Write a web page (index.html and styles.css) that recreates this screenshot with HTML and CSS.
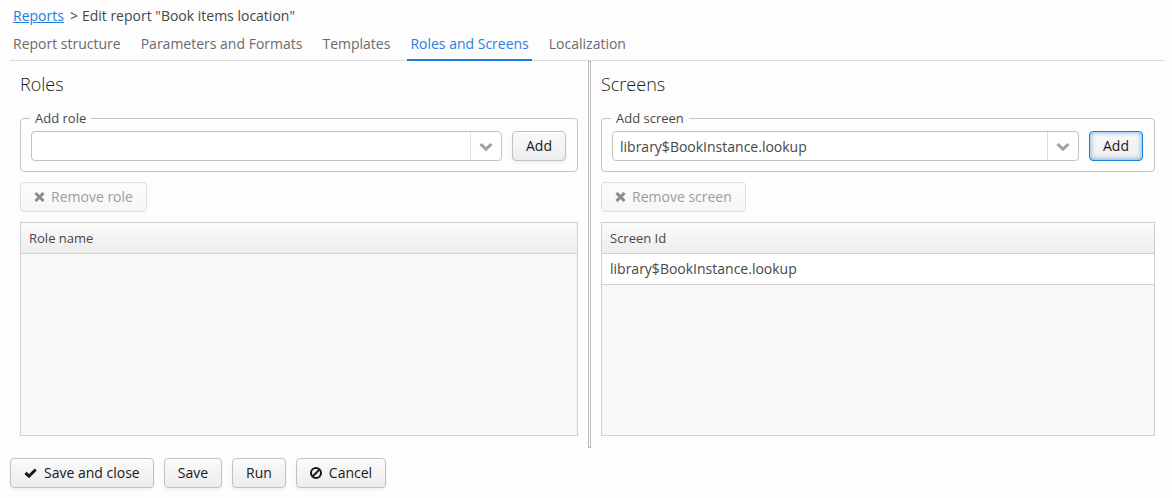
FILE: index.html
```
<!DOCTYPE html>
<html lang="en">
<head>
<meta charset="utf-8">
<title>Edit report "Book items location"</title>
<link rel="stylesheet" href="styles.css">
</head>
<body>
<div class="page">
  <nav class="breadcrumbs"><a href="#">Reports</a><span class="separator">&gt;</span><span>Edit report "Book items location"</span></nav>
  <nav class="tabs">
    <button class="tab" type="button">Report structure</button>
    <button class="tab" type="button">Parameters and Formats</button>
    <button class="tab" type="button">Templates</button>
    <button class="tab active" type="button">Roles and Screens</button>
    <button class="tab" type="button">Localization</button>
  </nav>
  <main class="split">
    <section class="pane">
      <h2>Roles</h2>
      <fieldset class="group">
        <legend>Add role</legend>
        <div class="combo">
          <select aria-label="Add role"><option></option></select>
          <span class="arrow"><svg width="14" height="10" viewBox="0 0 14 10"><path d="M1.500 2 7 7.200 12.500 2" fill="none" stroke="currentColor" stroke-width="3"/></svg></span>
        </div>
        <button class="btn" type="button">Add</button>
      </fieldset>
      <button class="btn remove" type="button" disabled><svg width="11" height="10" viewBox="0 0 11 10"><path d="M1.500 1 9.500 9M9.500 1 1.500 9" stroke="currentColor" stroke-width="3"/></svg>Remove role</button>
      <div class="grid">
        <table>
          <thead><tr><th>Role name</th></tr></thead>
        </table>
      </div>
    </section>
    <div class="splitter"></div>
    <section class="pane">
      <h2>Screens</h2>
      <fieldset class="group">
        <legend>Add screen</legend>
        <div class="combo">
          <select aria-label="Add screen"><option>library$BookInstance.lookup</option></select>
          <span class="arrow"><svg width="14" height="10" viewBox="0 0 14 10"><path d="M1.500 2 7 7.200 12.500 2" fill="none" stroke="currentColor" stroke-width="3"/></svg></span>
        </div>
        <button class="btn focused" type="button">Add</button>
      </fieldset>
      <button class="btn remove" type="button" disabled><svg width="11" height="10" viewBox="0 0 11 10"><path d="M1.500 1 9.500 9M9.500 1 1.500 9" stroke="currentColor" stroke-width="3"/></svg>Remove screen</button>
      <div class="grid">
        <table>
          <thead><tr><th>Screen Id</th></tr></thead>
          <tbody><tr><td>library$BookInstance.lookup</td></tr></tbody>
        </table>
      </div>
    </section>
  </main>
  <footer class="actions">
    <button class="btn" type="button"><svg width="13" height="10" viewBox="0 0 13 10"><path d="M1.500 4.800 5 8.200 11.700 1.500" fill="none" stroke="currentColor" stroke-width="3"/></svg>Save and close</button>
    <button class="btn" type="button">Save</button>
    <button class="btn" type="button">Run</button>
    <button class="btn" type="button"><svg width="12" height="12" viewBox="0 0 12 12"><circle cx="6" cy="6" r="5" fill="none" stroke="currentColor" stroke-width="2"/><path d="M2.500 9.500 9.500 2.500" stroke="currentColor" stroke-width="2"/></svg>Cancel</button>
  </footer>
</div>
</body>
</html>
```
FILE: styles.css
```
* {
  box-sizing: border-box;
}

body {
  margin: 0;
  background: #fdfdfd;
  color: #474747;
  font: 14px/20px "Open Sans", "Noto Sans", sans-serif;
}

button,
select {
  font: inherit;
}

.page {
  display: flex;
  flex-direction: column;
  min-height: 100vh;
  padding: 6px 7px 10px 10px;
}

.breadcrumbs {
  display: flex;
  padding-left: 3px;
}

.breadcrumbs a {
  color: #197de1;
}

.separator {
  margin: 0 4px 0 6px;
}

.tabs {
  display: flex;
  gap: 14px;
  padding-top: 3px;
  border-bottom: 1px solid #dbdbdb;
}

.tab {
  height: 32px;
  margin-bottom: -1px;
  padding: 0 3px;
  border: 0;
  border-bottom: 2px solid transparent;
  background: none;
  color: #6b6b6b;
}

.tab.active {
  border-bottom-color: #197de1;
  color: #2b7de0;
}

.split {
  display: flex;
  flex: 1;
}

.pane {
  display: flex;
  flex: 1 1 20px;
  flex-direction: column;
  align-items: stretch;
  min-width: 0;
  padding: 9px 10px 12px;
}

.pane:first-child {
  flex-basis: 24px;
}

.splitter {
  width: 3px;
  border: 1px solid #bbb;
}

h2 {
  margin: 0 0 14px;
  color: #191919;
  font-size: 18px;
  font-weight: 300;
  line-height: 28px;
}

.group {
  display: flex;
  gap: 10px;
  min-width: 0;
  margin: -4px 0 10px;
  padding: 3px 11px 10px 10px;
  border: 1px solid #c2c2c2;
  border-radius: 4px;
}

.group legend {
  margin-left: -1px;
  padding: 0 5px;
  font-size: 13px;
  line-height: 20px;
}

.combo {
  display: flex;
  flex: 1;
  position: relative;
  height: 30px;
  min-width: 0;
}

.combo select {
  width: 100%;
  padding: 2px 38px 0 7px;
  border: 1px solid #c2c2c2;
  border-radius: 4px;
  background: #fff;
  color: #474747;
  appearance: none;
}

.arrow {
  display: flex;
  position: absolute;
  top: 1px;
  right: 1px;
  bottom: 1px;
  align-items: center;
  justify-content: center;
  width: 31px;
  padding-top: 2px;
  border-left: 1px solid #dedede;
  color: #a0a0a0;
  pointer-events: none;
}

.btn {
  display: flex;
  gap: 7px;
  align-items: center;
  height: 30px;
  padding: 0 13px;
  border: 1px solid #c0c0c0;
  border-radius: 4px;
  background: linear-gradient(#fafafa, #ededed);
  box-shadow: inset 0 1px 0 #fff, 0 2px 3px rgba(0, 0, 0, 0.05);
  color: #191919;
}

.btn.focused {
  border-color: #197de1;
  box-shadow: inset 0 0 4px 1px rgba(25, 125, 225, 0.5);
}

.btn:disabled {
  border-color: #dedede;
  background: linear-gradient(#fcfcfc, #f6f6f6);
  box-shadow: none;
  color: #9d9d9d;
}

.remove {
  gap: 6px;
  align-self: flex-start;
  margin-bottom: 10px;
}

.remove svg {
  color: #8c8c8c;
}

.grid {
  flex: 1;
  border: 1px solid #d0d0d0;
  background: #f8f8f8;
}

table {
  width: 100%;
  border-collapse: separate;
  border-spacing: 0;
}

th,
td {
  height: 31px;
  padding: 0 8px;
  border-bottom: 1px solid #d0d0d0;
  text-align: left;
}

th {
  background: linear-gradient(#fafafa, #ededed);
  font-size: 13px;
  font-weight: 400;
}

td {
  background: #fff;
}

.actions {
  display: flex;
  gap: 10px;
  padding-top: 10px;
}
```
